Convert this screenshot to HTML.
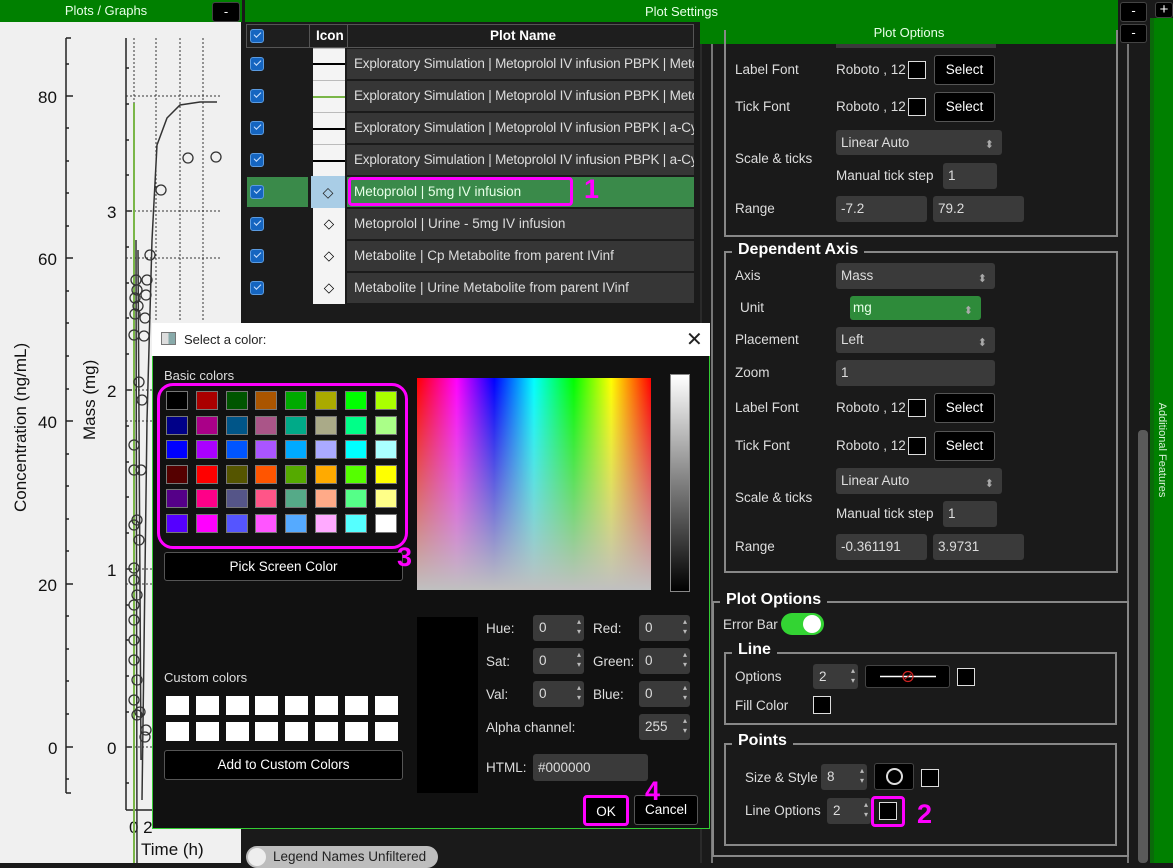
<!DOCTYPE html>
<html><head><meta charset="utf-8"><style>
*{box-sizing:border-box;margin:0;padding:0}
body{width:1173px;height:863px;overflow:hidden;background:#1a1a1a;font-family:"Liberation Sans",sans-serif;font-size:13.5px;color:#ddd;position:relative}
.a{position:absolute}
.g{background:#008000}
.btn{background:#000;color:#fff;border:1px solid #444;border-radius:3px;text-align:center}
.cb{position:absolute;width:14px;height:14px;background:#1565c0;border-radius:3px;border:1px solid #5b9be0}
.cb:after{content:"";position:absolute;left:3px;top:2px;width:6px;height:3px;border-left:1.5px solid #cfe3ff;border-bottom:1.5px solid #cfe3ff;transform:rotate(-45deg)}
.lbl{position:absolute;font-size:13.5px;color:#ddd;white-space:nowrap}
.inp{position:absolute;background:#3a3a3a;border-radius:3px;color:#ddd;padding-left:5px;font-size:13.5px;white-space:nowrap}
.sw{position:absolute;width:18px;height:18px;background:#000;border:1px solid #ddd}
.sel{position:absolute;background:#000;color:#fff;border:1px solid #555;border-radius:3px;text-align:center;font-size:13.5px}
.frame{position:absolute;border:2px solid #888}
.ft{position:absolute;background:#1a1a1a;font-weight:bold;font-size:16px;color:#fff;padding:0 6px}
.spin{position:absolute;background:#3a3a3a;border-radius:3px;color:#ddd;font-size:13.5px;padding-left:6px}
.spin:after{content:"▴\A▾";white-space:pre;position:absolute;right:3px;top:2px;font-size:8px;line-height:10px;color:#bbb}
.combo:after{content:"⬍";position:absolute;right:8px;top:3px;font-size:11px;color:#aaa}
.m{position:absolute;color:#f0f;font-weight:bold;font-size:27px}
.row{position:absolute;left:246px;width:448px;height:32px}
</style></head><body>

<!-- Left panel -->
<div class="a g" style="left:0;top:0;width:242px;height:22px;color:#e8ffe8;font-size:13px;text-align:center;line-height:22px;padding-right:30px">Plots / Graphs</div>
<div class="a btn" style="left:212px;top:2px;width:28px;height:20px;line-height:18px;font-size:13px">-</div>
<div class="a" style="left:0;top:22px;width:241px;height:841px;background:#f0f0f0"></div>
<svg class="a" style="left:0;top:22px" width="241" height="841" viewBox="0 22 241 841">
 <g fill="#111" font-family="Liberation Sans" font-size="17">
  <text x="38" y="103">80</text><text x="38" y="265">60</text><text x="38" y="428">40</text><text x="38" y="591">20</text><text x="48" y="754">0</text>
  <text x="107" y="218">3</text><text x="107" y="397">2</text><text x="107" y="576">1</text><text x="107" y="754">0</text>
  <text x="129" y="833">0 2</text><text x="141" y="855">Time (h)</text>
  <text transform="translate(26,512) rotate(-90)">Concentration (ng/mL)</text>
  <text transform="translate(95,440) rotate(-90)">Mass (mg)</text>
 </g>
 <g stroke="#222" stroke-width="1.5" fill="none">
  <path d="M66 38V793M126 38V810M126 810H152"/>
  <path d="M66 38h5M66 96h7M66 258h7M66 421h7M66 584h7M66 747h7M66 793h5M66 64h3M66 128h3M66 161h3M66 193h3M66 226h3M66 291h3M66 323h3M66 356h3M66 389h3M66 454h3M66 486h3M66 519h3M66 551h3M66 616h3M66 649h3M66 681h3M66 714h3M66 779h3"/>
  <path d="M126 211h6M126 390h6M126 569h6M126 747h6M126 68h3M126 104h3M126 140h3M126 175h3M126 247h3M126 283h3M126 318h3M126 354h3M126 426h3M126 462h3M126 497h3M126 533h3M126 605h3M126 640h3M126 676h3M126 712h3M126 783h3"/>
 </g>
 <g stroke="#333" stroke-width="1" stroke-dasharray="2 2" fill="none">
  <path d="M126 96H222M126 211H222M126 258H222M126 390H160M126 421H160M126 569H160M126 584H160M126 747H160"/>
  <path d="M134 38V810M156 38V320M180 38V320M203 38V320"/>
 </g>
 <path d="M134 103V863" stroke="#7ab648" stroke-width="2"/>
 <path d="M136 240L137 863M138 250L141 760M142 800L147 420L152 240L157 145L167 118L180 105L200 102L217 102" stroke="#333" stroke-width="1.5" fill="none"/>
 <g stroke="#333" stroke-width="1.3" fill="none">
  <circle cx="161" cy="190" r="5"/><circle cx="188" cy="158" r="5"/><circle cx="216" cy="157" r="5"/><circle cx="150" cy="255" r="5"/>
  <circle cx="136" cy="280" r="5"/><circle cx="137" cy="290" r="5"/><circle cx="135" cy="298" r="5"/><circle cx="138" cy="306" r="5"/><circle cx="135" cy="314" r="5"/><circle cx="147" cy="280" r="5"/><circle cx="146" cy="295" r="5"/><circle cx="145" cy="318" r="5"/>
  <circle cx="134" cy="335" r="5"/><circle cx="144" cy="336" r="5"/><circle cx="139" cy="382" r="5"/><circle cx="142" cy="400" r="5"/><circle cx="134" cy="445" r="5"/><circle cx="141" cy="470" r="5"/><circle cx="134" cy="470" r="5"/><circle cx="137" cy="520" r="5"/><circle cx="134" cy="525" r="5"/><circle cx="139" cy="540" r="5"/><circle cx="134" cy="568" r="5"/><circle cx="134" cy="580" r="5"/><circle cx="137" cy="595" r="5"/><circle cx="134" cy="605" r="5"/><circle cx="134" cy="620" r="5"/><circle cx="134" cy="640" r="5"/><circle cx="134" cy="660" r="5"/><circle cx="137" cy="680" r="5"/><circle cx="134" cy="700" r="5"/><circle cx="140" cy="712" r="5"/><circle cx="146" cy="730" r="5"/><circle cx="145" cy="737" r="5"/><circle cx="137" cy="715" r="5"/>
 </g>
</svg>

<!-- top green bars -->
<div class="a g" style="left:245px;top:0;width:873px;height:22px;color:#e8ffe8;font-size:13px;text-align:center;line-height:24px">Plot Settings</div>
<div class="a g" style="left:700px;top:22px;width:418px;height:22px;color:#e8ffe8;font-size:13px;text-align:center;line-height:22px">Plot Options</div>
<div class="a btn" style="left:1120px;top:2px;width:27px;height:20px;line-height:16px;font-size:13px">-</div>
<div class="a btn" style="left:1120px;top:24px;width:27px;height:19px;line-height:16px;font-size:13px">-</div>
<div class="a btn" style="left:1155px;top:2px;width:18px;height:16px;line-height:14px;font-size:15px">+</div>
<div class="a" style="left:1150px;top:18px;width:23px;height:845px;background:#0a6a0a"></div>
<div class="a g" style="left:1154px;top:18px;width:19px;height:845px"></div>
<div class="a" style="left:1162px;top:450px;transform:translate(-50%,-50%) rotate(90deg);font-size:11px;color:#d8f0d8;white-space:nowrap">Additional Features</div>

<!-- table -->
<div class="a" style="left:246px;top:24px;width:448px;height:24px;background:#1e1e1e;border:1px solid #555"></div>
<div class="a" style="left:309px;top:24px;width:1px;height:24px;background:#555"></div>
<div class="a" style="left:347px;top:24px;width:1px;height:24px;background:#555"></div>
<div class="cb" style="left:250px;top:29px"></div>
<div class="lbl" style="left:316px;top:28px;font-weight:bold;color:#fff">Icon</div>
<div class="lbl" style="left:490px;top:28px;font-weight:bold;color:#fff">Plot Name</div>
<div class="a" style="left:246px;top:48px;width:454px;height:274px;background:#1b1b1b"></div>

<div class="row" style="top:48px"><div class="cb" style="left:4px;top:9px"></div><div class="a" style="left:67px;top:0;width:32px;height:32px;background:#f4f4f4;border-top:1px solid #bbb"><div class="a" style="left:0;top:14px;width:32px;height:1.5px;background:#000"></div></div><div class="a" style="left:101px;top:1px;width:347px;height:30px;background:#363636;padding-left:7px;line-height:30px;white-space:nowrap;overflow:hidden;letter-spacing:-0.2px">Exploratory Simulation | Metoprolol IV infusion PBPK | Metoprolol</div></div>
<div class="row" style="top:80px"><div class="cb" style="left:4px;top:9px"></div><div class="a" style="left:67px;top:0;width:32px;height:32px;background:#f4f4f4;border-top:1px solid #bbb"><div class="a" style="left:0;top:15px;width:32px;height:1.5px;background:#7ab648"></div></div><div class="a" style="left:101px;top:1px;width:347px;height:30px;background:#363636;padding-left:7px;line-height:30px;white-space:nowrap;overflow:hidden;letter-spacing:-0.2px">Exploratory Simulation | Metoprolol IV infusion PBPK | Metoprolol</div></div>
<div class="row" style="top:112px"><div class="cb" style="left:4px;top:9px"></div><div class="a" style="left:67px;top:0;width:32px;height:32px;background:#f4f4f4;border-top:1px solid #bbb"><div class="a" style="left:0;top:15px;width:32px;height:1.5px;background:#000"></div></div><div class="a" style="left:101px;top:1px;width:347px;height:30px;background:#363636;padding-left:7px;line-height:30px;white-space:nowrap;overflow:hidden;letter-spacing:-0.2px">Exploratory Simulation | Metoprolol IV infusion PBPK | a-Cyp</div></div>
<div class="row" style="top:144px"><div class="cb" style="left:4px;top:9px"></div><div class="a" style="left:67px;top:0;width:32px;height:32px;background:#f4f4f4;border-top:1px solid #bbb"><div class="a" style="left:0;top:15px;width:32px;height:1.5px;background:#000"></div></div><div class="a" style="left:101px;top:1px;width:347px;height:30px;background:#363636;padding-left:7px;line-height:30px;white-space:nowrap;overflow:hidden;letter-spacing:-0.2px">Exploratory Simulation | Metoprolol IV infusion PBPK | a-Cyp</div></div>
<div class="row" style="top:176px"><div class="a" style="left:1px;top:1px;width:61px;height:30px;background:#3a8a4a"></div><div class="cb" style="left:4px;top:9px"></div><div class="a" style="left:65px;top:0;width:34px;height:32px;background:#a9cde6;font-size:14px;color:#222;text-align:center;line-height:32px">◇</div><div class="a" style="left:101px;top:1px;width:347px;height:30px;background:#3a8a4a;padding-left:7px;line-height:30px;white-space:nowrap;color:#e8ffe8">Metoprolol | 5mg IV infusion</div></div>
<div class="row" style="top:208px"><div class="cb" style="left:4px;top:9px"></div><div class="a" style="left:67px;top:0;width:32px;height:32px;background:#f4f4f4;color:#000;text-align:center;line-height:32px">◇</div><div class="a" style="left:101px;top:1px;width:347px;height:30px;background:#363636;padding-left:7px;line-height:30px;white-space:nowrap">Metoprolol | Urine - 5mg IV infusion</div></div>
<div class="row" style="top:240px"><div class="cb" style="left:4px;top:9px"></div><div class="a" style="left:67px;top:0;width:32px;height:32px;background:#f4f4f4;color:#000;text-align:center;line-height:32px">◇</div><div class="a" style="left:101px;top:1px;width:347px;height:30px;background:#363636;padding-left:7px;line-height:30px;white-space:nowrap">Metabolite | Cp Metabolite from parent IVinf</div></div>
<div class="row" style="top:272px"><div class="cb" style="left:4px;top:9px"></div><div class="a" style="left:67px;top:0;width:32px;height:32px;background:#f4f4f4;color:#000;text-align:center;line-height:32px">◇</div><div class="a" style="left:101px;top:1px;width:347px;height:30px;background:#363636;padding-left:7px;line-height:30px;white-space:nowrap">Metabolite | Urine Metabolite from parent IVinf</div></div>
<div class="a" style="left:348px;top:177px;width:225px;height:29px;border:3px solid #f0f;border-radius:4px"></div>
<div class="m" style="left:584px;top:174px">1</div>

<!-- bottom pill -->
<div class="a" style="left:246px;top:846px;width:192px;height:22px;background:#bdbdbd;border-radius:11px"></div>
<div class="a" style="left:248px;top:848px;width:18px;height:18px;background:#eee;border-radius:50%"></div>
<div class="lbl" style="left:273px;top:849px;color:#222">Legend Names Unfiltered</div>

<!-- Right options panel -->
<div class="a" style="left:700px;top:44px;width:2px;height:819px;background:#2a2a2a"></div>
<div class="a" style="left:711px;top:44px;width:2px;height:819px;background:#777"></div>
<div class="a" style="left:1127px;top:44px;width:2px;height:819px;background:#777"></div>
<div class="a" style="left:1138px;top:430px;width:10px;height:433px;background:#5a5a5a;border-radius:4px"></div>
<div class="a" style="left:836px;top:44px;width:160px;height:4px;background:#3a3a3a"></div>
<div class="frame" style="left:724px;top:30px;width:394px;height:207px;border-top:none"></div>

<div class="lbl" style="left:735px;top:62px">Label Font</div><div class="lbl" style="left:836px;top:62px">Roboto , 12</div><div class="sw" style="left:908px;top:61px"></div><div class="sel" style="left:934px;top:55px;width:61px;height:30px;line-height:28px">Select</div>
<div class="lbl" style="left:735px;top:99px">Tick Font</div><div class="lbl" style="left:836px;top:99px">Roboto , 12</div><div class="sw" style="left:908px;top:98px"></div><div class="sel" style="left:934px;top:92px;width:61px;height:30px;line-height:28px">Select</div>
<div class="lbl" style="left:735px;top:151px">Scale &amp; ticks</div><div class="inp combo" style="left:836px;top:130px;width:166px;height:25px;line-height:25px">Linear Auto</div>
<div class="lbl" style="left:836px;top:168px">Manual tick step</div><div class="inp" style="left:943px;top:163px;width:54px;height:26px;line-height:26px">1</div>
<div class="lbl" style="left:735px;top:201px">Range</div><div class="inp" style="left:836px;top:196px;width:91px;height:26px;line-height:26px">-7.2</div><div class="inp" style="left:933px;top:196px;width:91px;height:26px;line-height:26px">79.2</div>

<div class="frame" style="left:724px;top:251px;width:394px;height:322px"></div>
<div class="ft" style="left:732px;top:241px">Dependent Axis</div>
<div class="lbl" style="left:735px;top:268px">Axis</div><div class="inp combo" style="left:836px;top:263px;width:159px;height:26px;line-height:26px">Mass</div>
<div class="lbl" style="left:740px;top:300px">Unit</div><div class="inp combo" style="left:850px;top:296px;width:131px;height:24px;line-height:24px;background:#2e8b3a;color:#e8ffe8;padding-left:3px">mg</div>
<div class="lbl" style="left:735px;top:332px">Placement</div><div class="inp combo" style="left:836px;top:327px;width:159px;height:26px;line-height:26px">Left</div>
<div class="lbl" style="left:735px;top:365px">Zoom</div><div class="inp" style="left:836px;top:360px;width:159px;height:26px;line-height:26px">1</div>
<div class="lbl" style="left:735px;top:400px">Label Font</div><div class="lbl" style="left:836px;top:400px">Roboto , 12</div><div class="sw" style="left:908px;top:399px"></div><div class="sel" style="left:934px;top:393px;width:61px;height:30px;line-height:28px">Select</div>
<div class="lbl" style="left:735px;top:438px">Tick Font</div><div class="lbl" style="left:836px;top:438px">Roboto , 12</div><div class="sw" style="left:908px;top:437px"></div><div class="sel" style="left:934px;top:431px;width:61px;height:30px;line-height:28px">Select</div>
<div class="lbl" style="left:735px;top:490px">Scale &amp; ticks</div><div class="inp combo" style="left:836px;top:468px;width:166px;height:26px;line-height:26px">Linear Auto</div>
<div class="lbl" style="left:836px;top:506px">Manual tick step</div><div class="inp" style="left:943px;top:501px;width:54px;height:26px;line-height:26px">1</div>
<div class="lbl" style="left:735px;top:539px">Range</div><div class="inp" style="left:836px;top:534px;width:91px;height:26px;line-height:26px">-0.361191</div><div class="inp" style="left:933px;top:534px;width:91px;height:26px;line-height:26px">3.9731</div>

<div class="frame" style="left:712px;top:601px;width:417px;height:256px"></div>
<div class="ft" style="left:720px;top:591px">Plot Options</div>
<div class="lbl" style="left:723px;top:617px">Error Bar</div>
<div class="a" style="left:781px;top:613px;width:43px;height:22px;background:#33d433;border-radius:11px"></div>
<div class="a" style="left:803px;top:615px;width:18px;height:18px;background:#fff;border-radius:50%"></div>
<div class="frame" style="left:724px;top:652px;width:393px;height:73px"></div>
<div class="ft" style="left:732px;top:641px">Line</div>
<div class="lbl" style="left:735px;top:669px">Options</div><div class="spin" style="left:813px;top:664px;width:45px;height:25px;line-height:25px">2</div>
<div class="a" style="left:865px;top:665px;width:85px;height:23px;background:#000;border:1px solid #444;border-radius:3px"><svg width="85" height="23"><path d="M14 10.5H70" stroke="#fff" stroke-width="1.5"/><circle cx="42" cy="10.5" r="5" stroke="#c22" stroke-width="1.3" fill="none"/><path d="M39 13L45 8" stroke="#c22"/></svg></div>
<div class="sw" style="left:957px;top:668px"></div>
<div class="lbl" style="left:735px;top:698px">Fill Color</div><div class="sw" style="left:813px;top:696px"></div>
<div class="frame" style="left:724px;top:743px;width:393px;height:103px"></div>
<div class="ft" style="left:732px;top:732px">Points</div>
<div class="lbl" style="left:745px;top:770px">Size &amp; Style</div><div class="spin" style="left:821px;top:764px;width:46px;height:26px;line-height:26px">8</div>
<div class="a" style="left:874px;top:763px;width:40px;height:27px;background:#000;border:1px solid #444;border-radius:3px"><div class="a" style="left:11px;top:4px;width:17px;height:17px;border:2px solid #ddd;border-radius:50%"></div></div>
<div class="sw" style="left:921px;top:769px"></div>
<div class="lbl" style="left:745px;top:803px">Line Options</div><div class="spin" style="left:827px;top:798px;width:44px;height:26px;line-height:26px">2</div>
<div class="a" style="left:871px;top:796px;width:34px;height:31px;border:3px solid #f0f;border-radius:4px"></div>
<div class="sw" style="left:879px;top:802px"></div>
<div class="m" style="left:917px;top:799px">2</div>

<!-- Dialog -->
<div class="a" style="left:152px;top:323px;width:558px;height:506px;background:#111;border:1px solid #3c3"></div>
<div class="a" style="left:152px;top:323px;width:558px;height:33px;background:#fff"></div>
<div class="a" style="left:161px;top:332px;width:15px;height:13px;border:1px solid #777;background:linear-gradient(90deg,#ddd 50%,#8aa 50%)"></div>
<div class="lbl" style="left:184px;top:332px;color:#222;font-size:13px">Select a color:</div>
<div class="lbl" style="left:686px;top:327px;color:#222;font-size:20px">✕</div>
<div class="lbl" style="left:164px;top:368px;font-size:13px">Basic colors</div>
<div id="bc"></div>
<div class="a" style="left:157px;top:383px;width:251px;height:166px;border:3px solid #f0f;border-radius:16px"></div>
<div class="sel" style="left:164px;top:552px;width:239px;height:29px;line-height:27px">Pick Screen Color</div>
<div class="m" style="left:397px;top:542px">3</div>
<div class="a" style="left:417px;top:378px;width:234px;height:212px;background:linear-gradient(to bottom,rgba(192,192,192,0),#c0c0c0),linear-gradient(90deg,#f00,#f0f 17%,#00f 33%,#0ff 50%,#0f0 67%,#ff0 83%,#f00)"></div>
<div class="a" style="left:670px;top:374px;width:20px;height:218px;background:linear-gradient(#fff,#000);border:1px solid #888"></div>
<div class="lbl" style="left:164px;top:670px;font-size:13px">Custom colors</div>
<div id="cc"></div>
<div class="sel" style="left:164px;top:750px;width:239px;height:30px;line-height:28px">Add to Custom Colors</div>
<div class="a" style="left:417px;top:617px;width:61px;height:176px;background:#000"></div>
<div class="lbl" style="left:486px;top:621px">Hue:</div><div class="spin" style="left:533px;top:615px;width:51px;height:26px;line-height:26px">0</div>
<div class="lbl" style="left:593px;top:621px">Red:</div><div class="spin" style="left:639px;top:615px;width:51px;height:26px;line-height:26px">0</div>
<div class="lbl" style="left:486px;top:654px">Sat:</div><div class="spin" style="left:533px;top:648px;width:51px;height:26px;line-height:26px">0</div>
<div class="lbl" style="left:593px;top:654px">Green:</div><div class="spin" style="left:639px;top:648px;width:51px;height:26px;line-height:26px">0</div>
<div class="lbl" style="left:486px;top:687px">Val:</div><div class="spin" style="left:533px;top:681px;width:51px;height:26px;line-height:26px">0</div>
<div class="lbl" style="left:593px;top:687px">Blue:</div><div class="spin" style="left:639px;top:681px;width:51px;height:26px;line-height:26px">0</div>
<div class="lbl" style="left:486px;top:720px">Alpha channel:</div><div class="spin" style="left:639px;top:714px;width:51px;height:26px;line-height:26px">255</div>
<div class="lbl" style="left:486px;top:760px">HTML:</div><div class="inp" style="left:533px;top:754px;width:115px;height:27px;line-height:27px">#000000</div>
<div class="sel" style="left:583px;top:795px;width:46px;height:31px;line-height:27px;border:3px solid #f0f;border-radius:4px">OK</div>
<div class="sel" style="left:634px;top:795px;width:64px;height:30px;line-height:28px">Cancel</div>
<div class="m" style="left:645px;top:776px">4</div>

<script>
var cols=[["#000","#a00","#050","#a50","#0a0","#aa0","#0f0","#af0"],["#008","#a08","#058","#a58","#0a8","#aa8","#0f8","#af8"],["#00f","#a0f","#05f","#a5f","#0af","#aaf","#0ff","#aff"],["#500","#f00","#550","#f50","#5a0","#fa0","#5f0","#ff0"],["#508","#f08","#558","#f58","#5a8","#fa8","#5f8","#ff8"],["#50f","#f0f","#55f","#f5f","#5af","#faf","#5ff","#fff"]];
var h="";for(var r=0;r<6;r++)for(var c=0;c<8;c++)h+='<div class="a" style="left:'+(166+c*29.8)+'px;top:'+(391+r*24.6)+'px;width:22px;height:19px;background:'+cols[r][c]+';border:1px solid #777"></div>';
document.getElementById("bc").innerHTML=h;
h="";for(var r=0;r<2;r++)for(var c=0;c<8;c++)h+='<div class="a" style="left:'+(166+c*29.8)+'px;top:'+(696+r*25.5)+'px;width:23px;height:19px;background:#fff"></div>';
document.getElementById("cc").innerHTML=h;
</script>
</body></html>
